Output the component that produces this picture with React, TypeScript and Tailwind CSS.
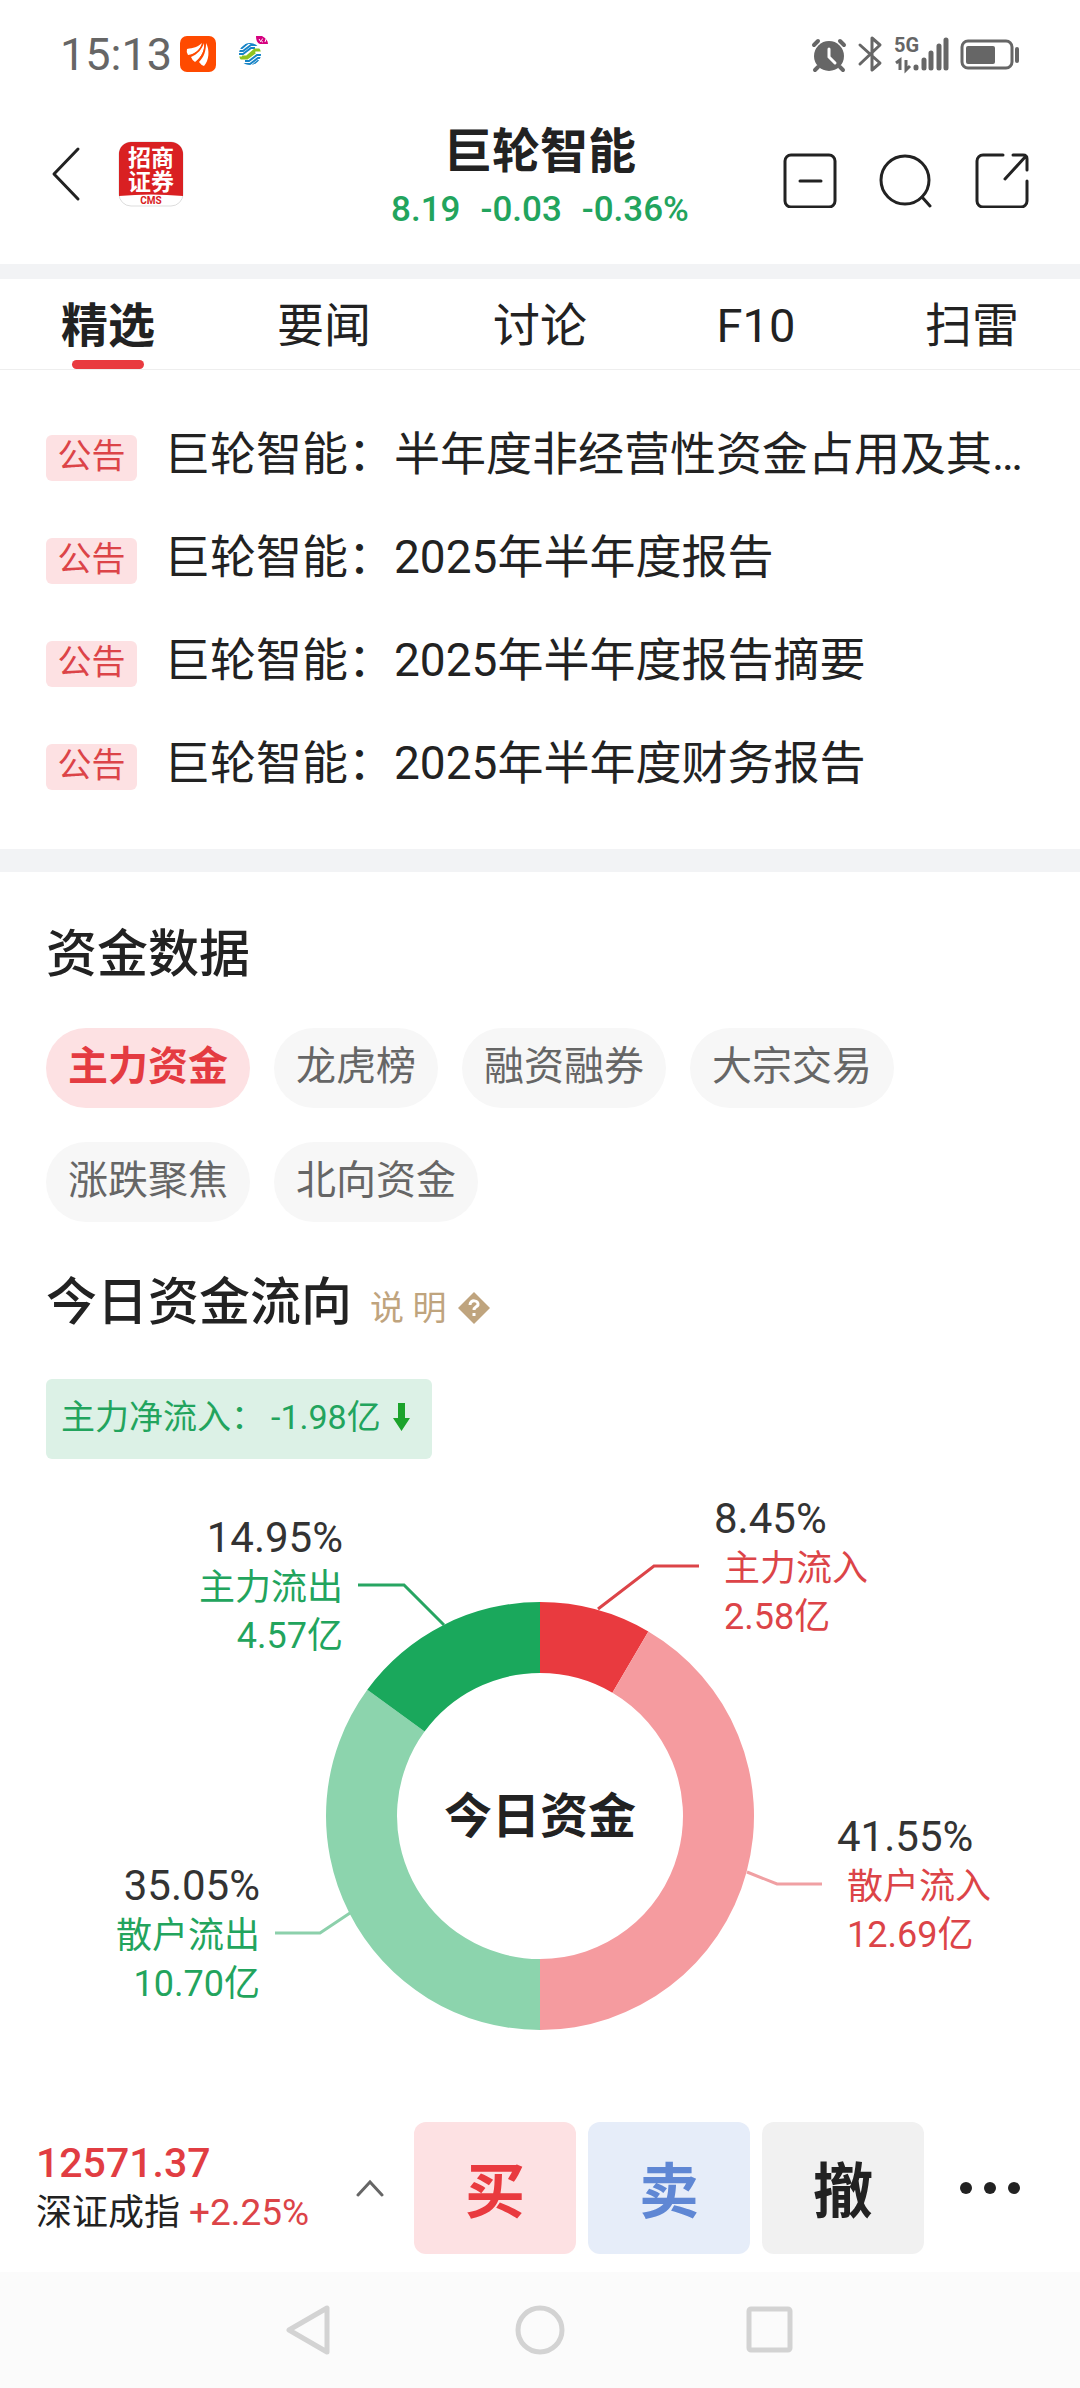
import type { ReactNode } from 'react';

type Notice = { id: number; title: string };

const TABS = ['精选', '要闻', '讨论', 'F10', '扫雷'];

const NOTICES: Notice[] = [
  { id: 1, title: '巨轮智能：半年度非经营性资金占用及其他关联资金往来情况' },
  { id: 2, title: '巨轮智能：2025年半年度报告' },
  { id: 3, title: '巨轮智能：2025年半年度报告摘要' },
  { id: 4, title: '巨轮智能：2025年半年度财务报告' },
];

const FUND_TYPES = ['主力资金', '龙虎榜', '融资融券', '大宗交易', '涨跌聚焦', '北向资金'];

const SLICES = [
  { percent: 8.45, color: '#e93a3f' },
  { percent: 41.55, color: '#f59b9f' },
  { percent: 35.05, color: '#8cd4ad' },
  { percent: 14.95, color: '#1aa85c' },
];

const LABELS = [
  { name: '主力流入', percent: '8.45%', amount: '2.58亿', x: 714, y: 74, side: 'right', line: '598,150 654,107 699,107', stroke: '#dc4448' },
  { name: '散户流入', percent: '41.55%', amount: '12.69亿', x: 837, y: 392, side: 'right', line: '747,413 777,425 822,425', stroke: '#f0a0a3' },
  { name: '散户流出', percent: '35.05%', amount: '10.70亿', x: 260, y: 441, side: 'left', line: '350,454 320,474 275,474', stroke: '#8cd0ab' },
  { name: '主力流出', percent: '14.95%', amount: '4.57亿', x: 343, y: 93, side: 'left', line: '444,166 404,126 358,126', stroke: '#27a562' },
];

const CX = 540;
const CY = 357;

function point(percent: number, r: number) {
  const a = (percent / 100) * Math.PI * 2;
  return `${(CX + r * Math.sin(a)).toFixed(2)} ${(CY - r * Math.cos(a)).toFixed(2)}`;
}

function arc(from: number, to: number) {
  return `M${point(from, 214)} A214 214 0 0 1 ${point(to, 214)} L${point(to, 143)} A143 143 0 0 0 ${point(from, 143)} Z`;
}

function StatusBar() {
  return (
    <div className="flex h-24 items-center justify-between px-[60px] pt-3 text-[#666]">
      <div className="flex items-center">
        <span className="text-[45px] leading-none">15:13</span>
        <svg className="ml-2 h-9 w-9" viewBox="0 0 36 36">
          <rect width="36" height="36" rx="7" fill="#ff4a00" />
          <g fill="#fff">
            <path d="M22 7C18 11 13 12 7 13q-1 3 1 6C15 18 20 14 22 7z" />
            <path d="M24 7C22 13 18 18 11 21q1 3 4 5C21 22 25 15 24 7z" />
            <path d="M26 7C26 15 24 21 19 26q2 3 5 4C29 25 30 14 26 7z" />
          </g>
          <path d="M23 7C21 13 17 17 10 20M25 7C25 15 22 20 17 25" fill="none" stroke="#ff4a00" strokeWidth="1" />
        </svg>
        <svg className="ml-[22px] h-9 w-8" viewBox="0 0 32 36" fill="none">
          <clipPath id="globe">
            <circle cx="12" cy="18" r="11" />
          </clipPath>
          <g clipPath="url(#globe)" strokeWidth="2">
            <path d="M0 12h4l6-5h10M0 15h5l8-6h11M0 18h5l8-6h4" stroke="#1784c7" />
            <path d="M4 21h5l8-7h7M0 22h9l8-6" stroke="#8fc31f" strokeWidth="3" />
            <path d="M7 25h4l8-6h6M2 28h10l8-6h5M5 30h9l6-5h4" stroke="#1784c7" />
          </g>
          <path d="M18 0h6c4 2 6 5 6 8H22c-3-1-4-4-4-8z" fill="#d6007f" />
          <path d="M21 3l2 3M25 3c-2 0-2 3 0 3M28 3l-1 3" stroke="#fff" strokeWidth="1" />
        </svg>
      </div>
      <svg className="h-9 w-[210px] overflow-visible" viewBox="0 0 210 36" fill="none" stroke="currentColor" strokeLinecap="round">
        <circle cx="19" cy="20" r="15" fill="currentColor" stroke="none" />
        <path d="M4 9l4-4M34 9l-4-4M8 31l-3 3M30 31l3 3" strokeWidth="4" />
        <path d="M19 13v8l6 6" stroke="#fff" strokeWidth="3" />
        <path d="M50 9l20 18-8 7V2l8 7-20 19" strokeWidth="3" strokeLinejoin="round" />
        <text x="84" y="16" className="font-['Liberation_Sans_Narrow',Roboto,sans-serif] text-[20px] font-bold" fill="currentColor" stroke="none">5G</text>
        <path d="M86 27l4-3v10M96 24v10l4-4" strokeWidth="3" strokeLinecap="butt" />
        <path d="M106 31v1M114 24v8M121 17v15M129 10v22M136 4v28" strokeWidth="5" />
        <rect x="152" y="5" width="50" height="27" rx="6" strokeWidth="3" />
        <rect x="156" y="10" width="29" height="18" rx="2" fill="currentColor" stroke="none" />
        <path d="M207 13v12" strokeWidth="4" />
      </svg>
    </div>
  );
}

function IconButton({ label, children }: { label: string; children: ReactNode }) {
  return (
    <button aria-label={label} className="text-[#222]">
      <svg className="h-14 w-14" viewBox="0 0 56 56" fill="none" stroke="currentColor" strokeWidth="3" strokeLinecap="round" strokeLinejoin="round">
        {children}
      </svg>
    </button>
  );
}

function Header() {
  return (
    <header className="grid h-[168px] grid-cols-3 items-center px-[50px] pb-3">
      <div className="flex items-center gap-9">
        <button aria-label="返回" className="text-[#222]">
          <svg className="h-14 w-8" viewBox="0 0 32 56" fill="none" stroke="currentColor" strokeWidth="3" strokeLinecap="round" strokeLinejoin="round">
            <path d="M28 3L4 28l24 25" />
          </svg>
        </button>
        <svg className="h-[66px] w-[66px]" viewBox="0 0 66 66">
          <rect x="1" y="1" width="64" height="64" rx="12" fill="#fff" stroke="#ddd" />
          <path d="M1 13A12 12 0 0 1 13 1H53A12 12 0 0 1 65 13V55Q33 52 1 55Z" fill="#d92022" />
          <g fill="#fff" fontSize="23" fontWeight="700" textAnchor="middle">
            <text x="33" y="25">招商</text>
            <text x="33" y="49">证券</text>
          </g>
          <text x="33" y="63" fill="#d92022" fontSize="10" fontWeight="700" textAnchor="middle">CMS</text>
        </svg>
      </div>
      <div className="mt-3 flex flex-col items-center whitespace-nowrap">
        <h1 className="text-5xl font-bold leading-[60px]">巨轮智能</h1>
        <p className="flex gap-5 text-[35px] font-medium leading-[56px] text-[#22a45d]">
          <span>8.19</span>
          <span>-0.03</span>
          <span>-0.36%</span>
        </p>
      </div>
      <div className="mt-3 flex items-center justify-end gap-10">
        <IconButton label="移除自选">
          <rect x="3" y="3" width="50" height="52" rx="6" />
          <path d="M18 29h21" />
        </IconButton>
        <IconButton label="搜索">
          <circle cx="27" cy="28" r="24" />
          <path d="M44 45l8 9" />
        </IconButton>
        <IconButton label="分享">
          <path d="M29 3H9a6 6 0 0 0-6 6v40a6 6 0 0 0 6 6h38a6 6 0 0 0 6-6V29M39 3h10q4 0 4 4v11M52 4L31 27" />
        </IconButton>
      </div>
    </header>
  );
}

function Tabs() {
  return (
    <nav className="grid h-[91px] grid-cols-5 border-b border-[#eee]">
      {TABS.map((tab, i) => (
        <button key={tab} className="flex flex-col items-center text-[47px] leading-[93px]">
          <span className={i === 0 ? 'font-bold' : ''}>{tab}</span>
          {i === 0 && <span className="-mt-3 h-[9px] w-[72px] shrink-0 rounded-full bg-[#e93a3f]" />}
        </button>
      ))}
    </nav>
  );
}

function Notices() {
  return (
    <ul className="h-[479px] px-[46px] pt-8">
      {NOTICES.map((n) => (
        <li key={n.id}>
          <a href={`#notice-${n.id}`} className="flex h-[103px] items-center gap-[27px]">
            <span className="mt-2 flex h-[46px] w-[91px] shrink-0 items-center justify-center rounded-md bg-[#fde1e3] pb-1 text-[34px] leading-none text-[#dc4448]">
              公告
            </span>
            <span className="min-w-0 flex-1 truncate text-[46px] leading-[64px]">{n.title}</span>
          </a>
        </li>
      ))}
    </ul>
  );
}

function FundChart() {
  let start = 0;
  return (
    <svg className="block w-full" viewBox="0 0 1080 645">
      {SLICES.map((s) => {
        const from = start;
        start += s.percent;
        return <path key={s.color} d={arc(from, start)} fill={s.color} />;
      })}
      <text x={CX} y={CY + 17} fontSize="48" fontWeight="700" textAnchor="middle" fill="#222">今日资金</text>
      {LABELS.map((l) => {
        const right = l.side === 'right';
        const x = right ? l.x + 10 : l.x;
        const anchor = right ? 'start' : 'end';
        const color = l.name.endsWith('入') ? '#dc4448' : '#22a45d';
        return (
          <g key={l.name} textAnchor={anchor}>
            <polyline points={l.line} fill="none" stroke={l.stroke} strokeWidth="3" />
            <text x={l.x} y={l.y} fontSize="42" fill="#333">{l.percent}</text>
            <text x={x} y={l.y + 48} fontSize="36" fill={color}>{l.name}</text>
            <text x={x} y={l.y + 96} fontSize="36" fill={color}>{l.amount}</text>
          </g>
        );
      })}
    </svg>
  );
}

function FundSection() {
  return (
    <section>
      <div className="px-[46px] pt-[51px]">
        <h2 className="text-[51px] font-medium leading-[64px]">资金数据</h2>
        <div className="mt-[41px] flex flex-wrap gap-x-6 gap-y-[34px]">
          {FUND_TYPES.map((type, i) => (
            <button
              key={type}
              className={
                i === 0
                  ? 'h-20 rounded-full bg-[#fde1e3] px-[22px] pb-0.5 text-[40px] font-bold leading-none text-[#e43b41]'
                  : 'h-20 rounded-full bg-[#f7f7f7] px-[22px] pb-0.5 text-[40px] leading-none text-[#666]'
              }
            >
              {type}
            </button>
          ))}
        </div>
        <div className="mt-[47px] flex items-baseline">
          <h2 className="text-[51px] font-medium leading-[68px]">今日资金流向</h2>
          <button className="ml-[18px] flex items-center gap-3 text-[34px] leading-none text-[#bfa47e]">
            说 明
            <svg className="h-8 w-8" viewBox="0 0 32 32">
              <path d="M16 0l16 16-16 16L0 16z" fill="#bfa47e" />
              <path d="M12 13c0-6 9-5 8 0-1 2-4 2-4 5M16 21v3" fill="none" stroke="#fff" strokeWidth="3" />
            </svg>
          </button>
        </div>
        <p className="mt-[42px] inline-flex h-20 items-center rounded-md bg-[#dcf1e6] pb-1 pl-[15px] pr-[22px] align-top text-[34px] leading-none text-[#22a45d]">
          <span>主力净流入：</span>
          <span className="ml-1.5">-1.98亿</span>
          <svg className="ml-3 h-7 w-[17px]" viewBox="0 0 17 28" fill="#1ba32b">
            <path d="M5 0h7v15h5L8.500 28 0 15h5z" />
          </svg>
        </p>
      </div>
      <FundChart />
    </section>
  );
}

function TradeBar() {
  return (
    <div className="flex h-[168px] items-center pl-9 pr-[60px]">
      <div className="flex-1 whitespace-nowrap">
        <p className="text-[41px] font-medium leading-[50px] text-[#e13d42]">12571.37</p>
        <p className="text-4xl leading-[50px]">
          深证成指 <span className="text-[37px] text-[#dc4448]">+2.25%</span>
        </p>
      </div>
      <button aria-label="展开指数" className="mr-[30px] text-[#666]">
        <svg className="h-5 w-7" viewBox="0 0 28 20" fill="none" stroke="currentColor" strokeWidth="3" strokeLinecap="round">
          <path d="M2 17L14 4l12 13" />
        </svg>
      </button>
      <div className="flex gap-3 text-[60px] font-bold leading-none">
        <button className="h-[132px] w-[162px] rounded-xl bg-[#fde1e3] pt-2.5 text-[#e93a3f]">买</button>
        <button className="h-[132px] w-[162px] rounded-xl bg-[#e6edf9] pt-2.5 text-[#5f87d4]">卖</button>
        <button className="h-[132px] w-[162px] rounded-xl bg-[#f1f1f1] pt-2.5 text-[#222]">撤</button>
      </div>
      <button aria-label="更多" className="ml-9">
        <svg className="h-3 w-[60px]" viewBox="0 0 60 12" fill="#222">
          <circle cx="6" cy="6" r="6" />
          <circle cx="30" cy="6" r="6" />
          <circle cx="54" cy="6" r="6" />
        </svg>
      </button>
    </div>
  );
}

function SystemNav() {
  return (
    <div className="flex h-[116px] items-center justify-center gap-[180px] bg-[#fbfbfb] text-[#d3d3d3]">
      <button aria-label="后退">
        <svg className="h-[50px] w-[50px]" viewBox="0 0 50 50" fill="none" stroke="currentColor" strokeWidth="5" strokeLinejoin="round">
          <path d="M42 3v44L4 25z" />
        </svg>
      </button>
      <button aria-label="主屏幕">
        <svg className="h-[50px] w-[50px]" viewBox="0 0 50 50" fill="none" stroke="currentColor" strokeWidth="5">
          <circle cx="25" cy="25" r="22" />
        </svg>
      </button>
      <button aria-label="最近任务">
        <svg className="h-[50px] w-[50px]" viewBox="0 0 50 50" fill="none" stroke="currentColor" strokeWidth="5">
          <rect x="4" y="4" width="41" height="41" rx="2" />
        </svg>
      </button>
    </div>
  );
}

export default function App() {
  return (
    <div className="min-h-screen bg-white font-[Roboto,'Noto_Sans_CJK_SC',sans-serif] text-[#222]" lang="zh-CN">
      <StatusBar />
      <Header />
      <div className="h-[15px] bg-[#f2f3f5]" />
      <Tabs />
      <Notices />
      <div className="h-[23px] bg-[#f2f3f5]" />
      <FundSection />
      <TradeBar />
      <SystemNav />
    </div>
  );
}
